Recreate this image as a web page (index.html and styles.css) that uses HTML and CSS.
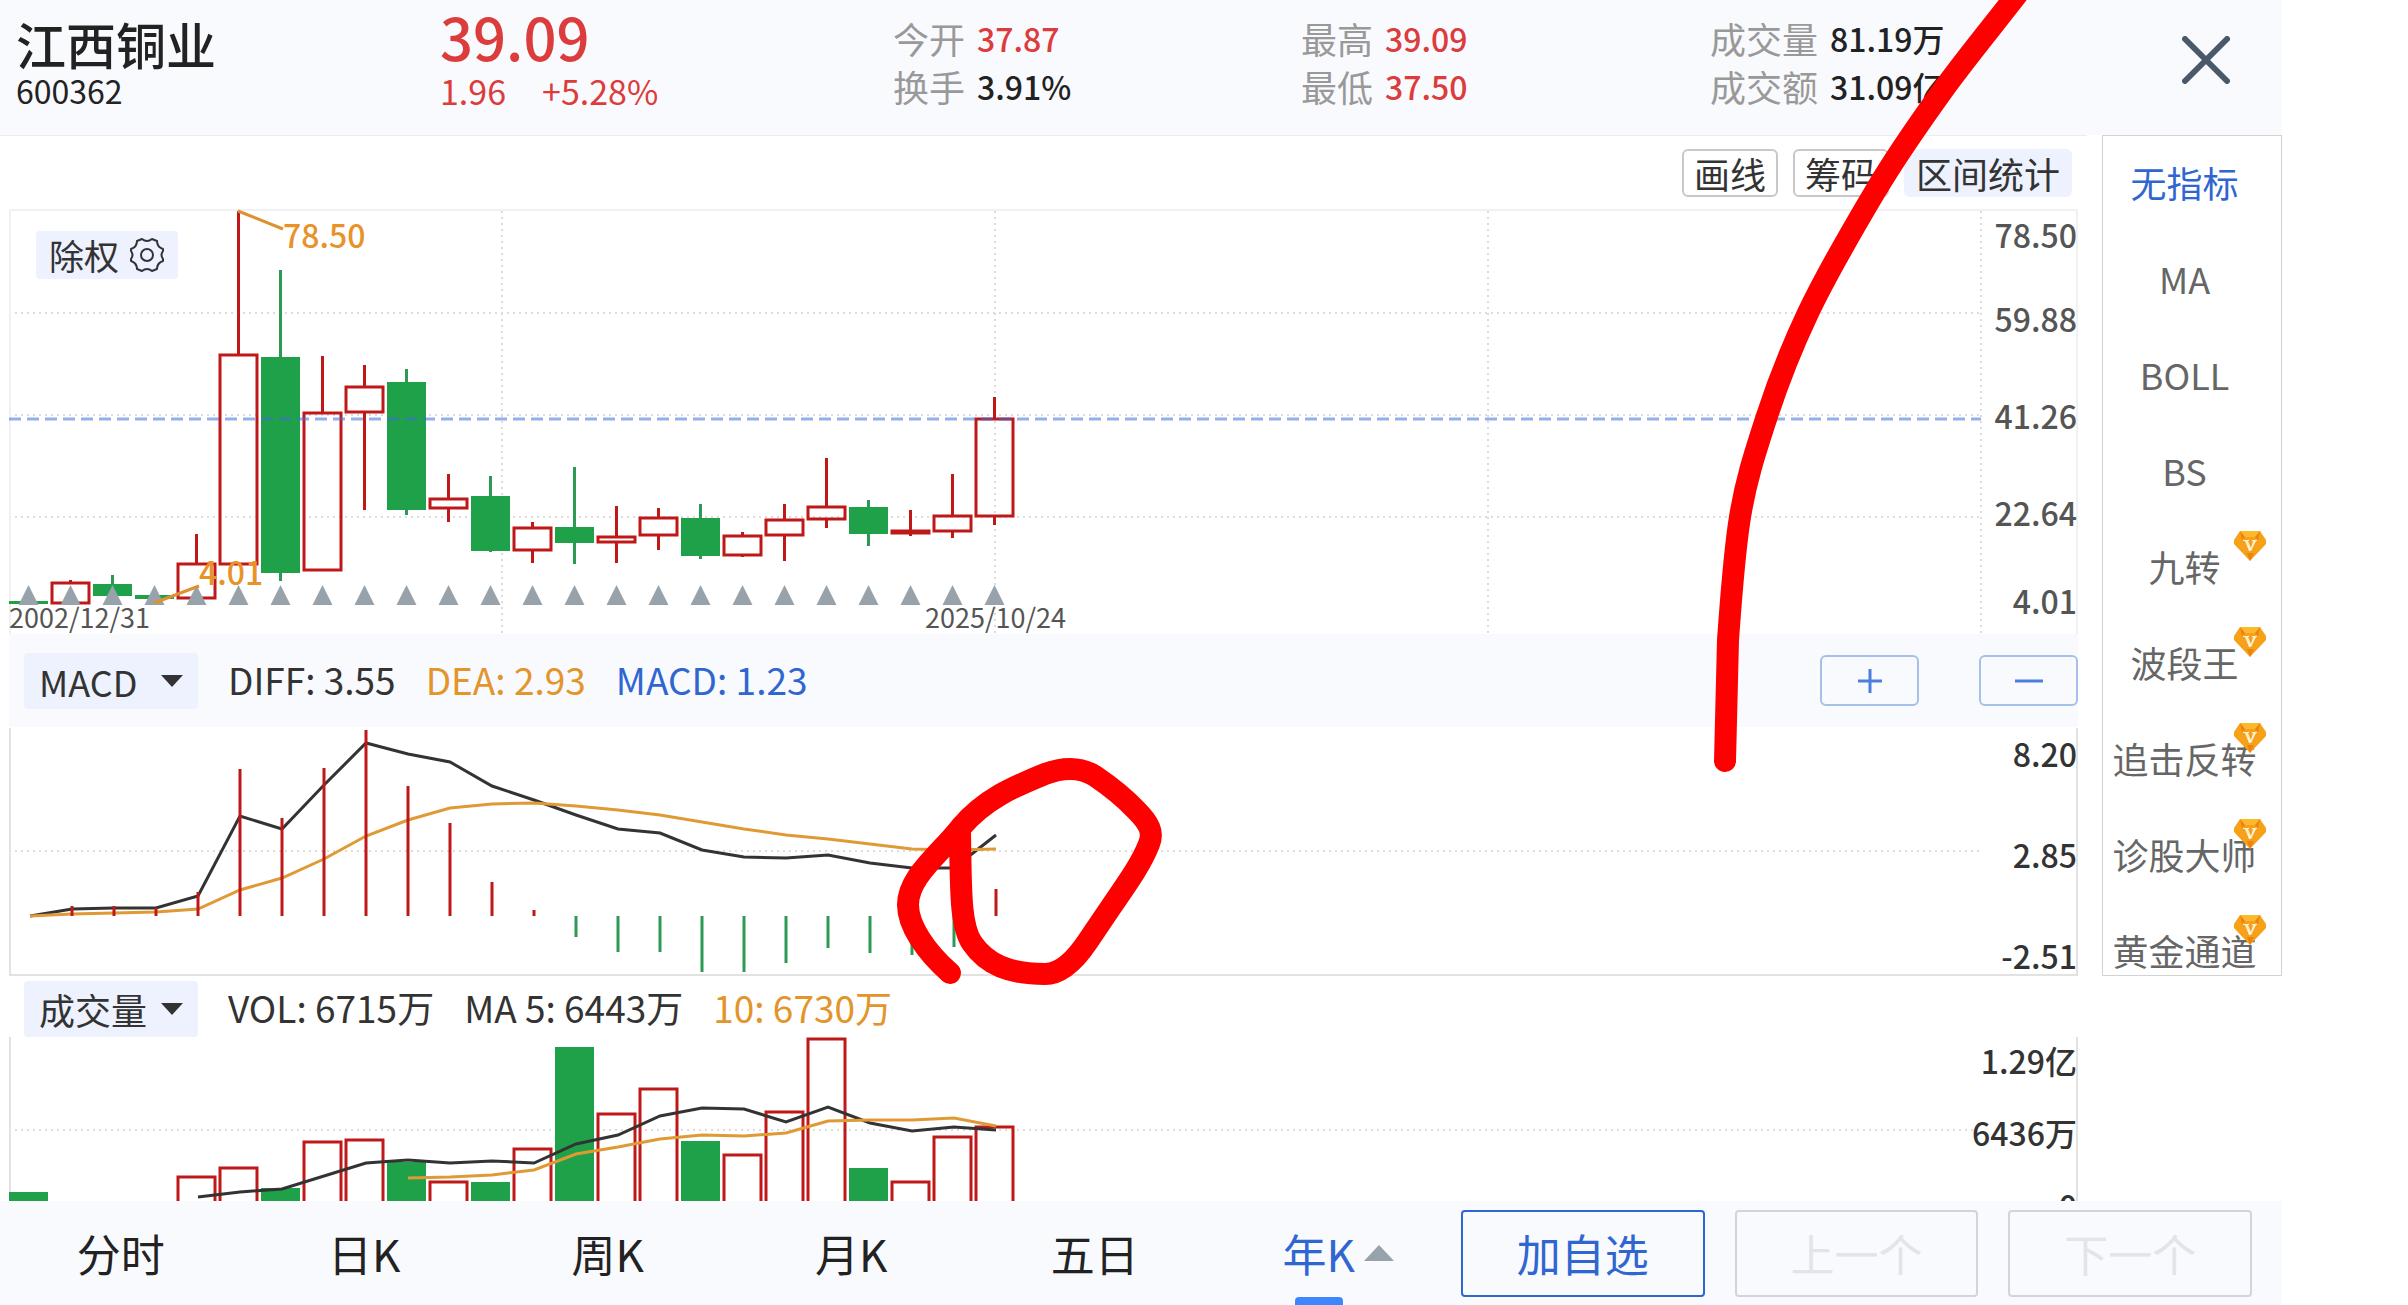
FILE: index.html
```html
<!DOCTYPE html>
<html lang="zh-CN">
<head>
<meta charset="utf-8">
<meta name="viewport" content="width=device-width, initial-scale=1">
<title>江西铜业 600362</title>
<link rel="stylesheet" href="styles.css">
</head>
<body>
<div class="app">
  <header class="quote">
    <div class="quote-id">
      <h1 class="stock-name">江西铜业</h1>
      <div class="stock-code">600362</div>
    </div>
    <div class="quote-price up">
      <div class="price">39.09</div>
      <div class="change"><span>1.96</span><span>+5.28%</span></div>
    </div>
    <dl class="stats">
      <div><dt>今开</dt><dd class="up">37.87</dd></div>
      <div><dt>换手</dt><dd>3.91%</dd></div>
    </dl>
    <dl class="stats">
      <div><dt>最高</dt><dd class="up">39.09</dd></div>
      <div><dt>最低</dt><dd class="up">37.50</dd></div>
    </dl>
    <dl class="stats">
      <div><dt>成交量</dt><dd>81.19万</dd></div>
      <div><dt>成交额</dt><dd>31.09亿</dd></div>
    </dl>
    <button class="close" type="button" aria-label="关闭">
      <svg width="48" height="48" viewBox="0 0 48 48"><path d="M3 3 45 45M45 3 3 45"/></svg>
    </button>
  </header>

  <main>
    <div class="upper">
      <section class="charts">
        <div class="toolbar">
          <button class="tool" type="button">画线</button>
          <button class="tool" type="button">筹码</button>
          <button class="tool tool-filled" type="button">区间统计</button>
        </div>

        <div class="plot">
          <svg class="chart" viewBox="9 209 2069 425" role="img" aria-label="年K线">
            <path class="frame-light" d="M10 634V210H2077V634"/>
            <path class="grid" d="M15 313H1981M15 415H1981M15 517H1981M502 211V634M995 211V634M1488 211V634M1981 211V634"/>
            <g id="candles"></g>
            <path class="last-price" d="M9 419H1981"/>
            <g id="events"></g>
            <path class="pointer" d="M238 211 283 229M154 603 199 586"/>
            <text class="extreme" x="283" y="248">78.50</text>
            <text class="extreme" x="199" y="585">4.01</text>
            <text class="date" x="9" y="628">2002/12/31</text>
            <text class="date" x="925" y="628">2025/10/24</text>
            <g class="axis axis-price">
              <text x="2077" y="248">78.50</text>
              <text x="2077" y="332">59.88</text>
              <text x="2077" y="429">41.26</text>
              <text x="2077" y="526">22.64</text>
              <text x="2077" y="614">4.01</text>
            </g>
          </svg>
          <button class="adjust" type="button">除权
            <svg width="38" height="36" viewBox="0 0 38 36"><path d="M14 2Q19 6 24 2L29 4Q29 10 35 12V14Q32 18 35 22V24Q29 26 29 32L24 34Q19 30 14 34L9 32Q9 26 3 24V22Q6 18 3 14V12Q9 10 9 4Z"/><circle cx="19" cy="18" r="6"/></svg>
          </button>
        </div>

        <div class="indicator-bar tinted">
          <div class="picker">
            <select aria-label="指标"><option>MACD</option></select>
            <svg width="22" height="12" viewBox="0 0 22 12"><path d="M0 0H22L11 12Z"/></svg>
          </div>
          <span class="reading">DIFF: 3.55</span><span class="reading orange">DEA: 2.93</span><span class="reading blue">MACD: 1.23</span>
          <div class="zoom">
            <button type="button" aria-label="放大"><svg width="28" height="28" viewBox="0 0 28 28"><path d="M2 14H26M14 2V26"/></svg></button>
            <button type="button" aria-label="缩小"><svg width="28" height="28" viewBox="0 0 28 28"><path d="M0 14H28"/></svg></button>
          </div>
        </div>

        <svg class="chart" viewBox="9 727 2069 249" role="img" aria-label="MACD">
          <path class="frame" d="M10 728V975H2077V728"/>
          <path class="grid" d="M15 851H1981"/>
          <polyline class="line-dark" points="30,916 72,909 114,908 156,908 198,896 240,816 282,829 324,785 366,743 408,754 450,762 492,786 534,800 576,815 618,829 660,833 702,850 744,857 786,858 828,855 870,863 912,868 954,868 996,835"/>
          <polyline class="line-orange" points="30,916 72,914 114,913 156,912 198,909 240,890 282,878 324,859 366,836 408,820 450,808 492,804 534,803 576,806 618,810 660,815 702,822 744,829 786,835 828,839 870,844 912,849 954,850 996,849"/>
          <g id="macd"></g>
          <g class="axis">
            <text x="2077" y="767">8.20</text>
            <text x="2077" y="868">2.85</text>
            <text x="2077" y="969">-2.51</text>
          </g>
        </svg>
      </section>

      <aside class="indicators">
        <ul>
          <li><button class="active" type="button">无指标</button></li>
          <li><button type="button">MA</button></li>
          <li><button type="button">BOLL</button></li>
          <li><button type="button">BS</button></li>
          <li><button class="vip" type="button">九转</button></li>
          <li><button class="vip" type="button">波段王</button></li>
          <li><button class="vip" type="button">追击反转</button></li>
          <li><button class="vip" type="button">诊股大师</button></li>
          <li><button class="vip" type="button">黄金通道</button></li>
        </ul>
      </aside>
    </div>

    <section class="volume">
      <div class="indicator-bar">
        <div class="picker">
          <select aria-label="副图指标"><option>成交量</option></select>
          <svg width="22" height="12" viewBox="0 0 22 12"><path d="M0 0H22L11 12Z"/></svg>
        </div>
        <span class="reading">VOL: 6715万</span><span class="reading">MA 5: 6443万</span><span class="reading orange">10: 6730万</span>
      </div>
      <svg class="chart" viewBox="9 1037 2069 164" role="img" aria-label="成交量">
        <path class="frame" d="M10 1037V1201M2077 1037V1201"/>
        <path class="grid" d="M15 1130H1974"/>
        <g id="volumes"></g>
        <polyline class="line-dark" points="198,1197 240,1192 282,1189 324,1176 366,1163 408,1160 450,1163 492,1161 534,1163 576,1144 618,1135 660,1116 702,1108 744,1109 786,1122 828,1107 870,1123 912,1131 954,1127 996,1130"/>
        <polyline class="line-orange" points="408,1178 450,1177 492,1175 534,1170 576,1154 618,1147 660,1139 702,1135 744,1136 786,1133 828,1121 870,1120 912,1120 954,1118 996,1126"/>
        <g class="axis">
          <text x="2077" y="1074">1.29亿</text>
          <text x="2077" y="1146">6436万</text>
          <text x="2077" y="1219">0</text>
        </g>
      </svg>
    </section>
  </main>

  <footer class="bottom">
    <nav class="tabs">
      <button type="button">分时</button>
      <button type="button">日K</button>
      <button type="button">周K</button>
      <button type="button">月K</button>
      <button type="button">五日</button>
      <button class="active" type="button"><span>年K</span><svg width="30" height="16" viewBox="0 0 30 16"><path d="M0 16H30L15 0Z"/></svg></button>
    </nav>
    <div class="actions">
      <button class="primary" type="button">加自选</button>
      <button type="button" disabled>上一个</button>
      <button type="button" disabled>下一个</button>
    </div>
  </footer>

  <svg class="markup" viewBox="0 0 2282 1305" aria-hidden="true">
    <path d="M2022 -12C2000 17 1966 58 1943 90S1898 153 1876 190S1826 275 1808 313S1777 385 1766 419S1746 480 1740 517S1731 599 1728 640L1725 761"/>
    <path d="M950 973C925 951 908 925 908 905C908 877 938 856 961 827C985 799 1013 787 1045 774Q1074 763 1095 776Q1120 793 1136 810C1149 823 1154 832 1149 844C1142 862 1131 878 1111 907L1088 941Q1066 974 1045 974C1010 974 987 965 972 943C960 925 961 890 960 833"/>
  </svg>
</div>

<svg class="defs" width="0" height="0" aria-hidden="true">
  <symbol id="vip" viewBox="0 0 32 30">
    <path fill="#f7a11b" d="M6 0H26L32 9V13L16 30 0 13V9Z"/>
    <path fill="#fdb92c" d="M6 0H26L21 6H11Z"/>
    <path fill="#e8850c" d="M11 6 6 0 8 9ZM21 6 26 0 24 9ZM13 22 16 30 20 22Z"/>
    <path fill="#fff1cf" d="M9 9H15V10H14L17 17 19 10H18V9H23V10H22L17 20H15L11 10H9Z"/>
  </symbol>
</svg>
<script src="script.js"></script>
</body>
</html>
```
FILE: styles.css
```css
* { box-sizing: border-box; }

body {
  margin: 0;
  padding-right: 126px;
  background: #fff;
  color: #222;
  font-family: "Noto Sans CJK SC", "Noto Sans", sans-serif;
  font-size: 36px;
  overflow-x: hidden;
}

button, select {
  margin: 0;
  padding: 0;
  border: 0;
  background: none;
  color: inherit;
  font: inherit;
}

.app {
  position: relative;
  overflow: hidden;
}

.up { color: #dc3c3c; }
.orange { color: #e3942a; }
.blue { color: #2f66cf; }
.defs { position: absolute; }

/* quote header */
.quote {
  display: grid;
  grid-template-columns: 425fr 452fr 408fr 409fr 472fr 100fr;
  height: 135px;
  padding-left: 16px;
  background: #f9fafe;
}

.stock-name {
  margin: 0;
  padding-top: 12px;
  font-size: 50px;
  font-weight: 500;
  line-height: 62px;
}

.stock-code {
  font-size: 32px;
  line-height: 32px;
}

.quote-price { margin-left: -1px; }

.price {
  padding-top: 4px;
  font-size: 58px;
  font-weight: 500;
  line-height: 64px;
}

.change {
  display: flex;
  gap: 36px;
  padding-top: 2px;
  font-size: 34px;
  line-height: 42px;
}

.stats {
  margin: 0;
  padding-top: 14px;
}

.stats div {
  display: flex;
  gap: 12px;
  line-height: 48px;
}

.stats dt { color: #999; }

.stats dd {
  margin: 0;
  font-size: 32px;
  font-weight: 500;
}

.close {
  align-self: start;
  justify-self: start;
  margin-top: 36px;
  height: 48px;
}

.close svg {
  display: block;
  fill: none;
  stroke: #4a5969;
  stroke-width: 6;
  stroke-linecap: round;
}

/* charts and indicator column */
.upper {
  display: grid;
  grid-template-columns: minmax(0, 1fr) 180px;
  column-gap: 15px;
}

.charts {
  padding: 0 9px;
  border-top: 1px solid #ececf0;
}

.toolbar {
  display: flex;
  justify-content: flex-end;
  gap: 15px;
  padding: 13px 6px 12px 0;
}

.tool {
  height: 48px;
  padding: 0 10px;
  border: 2px solid #c8c8c8;
  border-radius: 6px;
  color: #333;
  line-height: 44px;
}

.tool-filled {
  border-color: #edf2fe;
  background: #edf2fe;
}

.plot { position: relative; }

.chart {
  display: block;
  width: 100%;
  height: auto;
  fill: none;
}

.frame { stroke: #e2e2e2; stroke-width: 2; }
.frame-light { stroke: #f1f1f3; stroke-width: 2; }
.grid { stroke: #dcdcde; stroke-width: 2; stroke-dasharray: 2 4; }
.last-price { stroke: #3a6fd8; stroke-width: 3; stroke-dasharray: 12 6; opacity: .55; }
.pointer { stroke: #de9130; stroke-width: 3; }
.line-dark { stroke: #333; stroke-width: 3; }
.line-orange { stroke: #e09a35; stroke-width: 3; }
.rise { stroke: #bf1818; stroke-width: 3; }
.fall { stroke: #2c9a54; stroke-width: 3; }
.fall-body { fill: #1fa14a; }
.event { fill: #98a2ab; }

.extreme { fill: #e8922a; font-size: 32px; font-weight: 500; }
.date { fill: #555; font-size: 27px; }

.axis {
  fill: #333;
  font-size: 32px;
  font-weight: 500;
  text-anchor: end;
}

.axis-price { fill: #555; }

.adjust {
  position: absolute;
  top: 22px;
  left: 27px;
  display: flex;
  align-items: center;
  gap: 9px;
  height: 48px;
  padding: 0 12px 0 13px;
  border-radius: 4px;
  background: #edf2fe;
  color: #333;
  font-size: 35px;
  line-height: 48px;
}

.adjust svg { fill: none; stroke: #333; stroke-width: 2; stroke-linejoin: round; }

.indicator-bar {
  display: flex;
  align-items: center;
  gap: 30px;
  padding: 5px 0 0 15px;
  color: #333;
  line-height: 56px;
}

.tinted {
  height: 93px;
  padding-top: 0;
  background: #f9fafe;
}

.reading {
  padding-bottom: 3px;
  font-size: 37px;
  line-height: 53px;
}

.picker { position: relative; }

.picker select {
  appearance: none;
  display: block;
  width: 174px;
  height: 56px;
  padding: 0 0 3px 15px;
  border-radius: 4px;
  background: #edf2fe;
}

.picker svg {
  position: absolute;
  top: 22px;
  right: 15px;
  fill: #333;
  pointer-events: none;
}

.zoom {
  display: flex;
  gap: 60px;
  margin-left: auto;
}

.zoom button {
  display: flex;
  align-items: center;
  justify-content: center;
  width: 99px;
  height: 51px;
  border: 2px solid #a6c0e9;
  border-radius: 6px;
}

.zoom svg { stroke: #4a80dc; stroke-width: 3; }

.indicators {
  height: 0;
  min-height: 100%;
  overflow: hidden;
  border: 1px solid #d2d2d2;
}

.indicators ul {
  margin: 0;
  padding: 0;
  list-style: none;
}

.indicators button {
  display: block;
  position: relative;
  width: 100%;
  height: 96px;
  padding: 0 15px 3px 0;
  color: #666;
  line-height: 93px;
  text-align: center;
  white-space: nowrap;
}

.indicators .active { color: #2f66cf; }

.indicators svg {
  position: absolute;
  top: 11px;
  right: 15px;
  width: 32px;
  height: 30px;
}

.volume { padding: 0 204px 0 9px; }

/* period tabs and actions */
.bottom {
  display: flex;
  height: 104px;
  padding-right: 30px;
  background: #f9fafe;
  font-size: 44px;
}

.tabs {
  display: grid;
  grid-template-columns: repeat(6, 1fr);
  flex: 1461 1 0;
}

.tabs button {
  display: flex;
  align-items: center;
  justify-content: center;
  gap: 9px;
  padding: 2px 2px 2px 0;
  line-height: 100px;
}

.tabs .active { color: #2f66cf; }
.tabs svg { fill: #98a2ab; }
.tabs span { position: relative; }

.tabs span::after {
  content: "";
  position: absolute;
  bottom: -2px;
  left: 50%;
  width: 48px;
  height: 8px;
  margin-left: -24px;
  border-radius: 4px 4px 0 0;
  background: #3d86fd;
}

.actions {
  display: grid;
  grid-template-columns: repeat(3, 1fr);
  gap: 30px;
  flex: 791 1 0;
  padding: 9px 0 8px;
}

.actions button {
  padding-bottom: 2px;
  border: 2px solid #d3d4d9;
  border-radius: 4px;
  color: #e3e4e7;
}

.actions .primary {
  border-color: #2f66cf;
  color: #2f66cf;
}

/* freehand strokes over the page */
.markup {
  position: absolute;
  top: 0;
  left: 0;
  width: 100%;
  height: auto;
  fill: none;
  stroke: #fe0000;
  stroke-width: 22;
  stroke-linecap: round;
  stroke-linejoin: round;
  pointer-events: none;
}
```
FILE: script.js
```js
const PITCH = 42;
const BODY = 39;
const FLOOR = 1210;

// [direction, body top, body bottom, high, low] per year from 2002
const candles = [
  ['d', 601, 604, 601, 604], ['u', 582, 604, 580, 604], ['d', 584, 596, 575, 596], ['d', 595, 599, 595, 603],
  ['u', 563, 599, 534, 599], ['u', 354, 565, 211, 565], ['d', 357, 573, 270, 581], ['u', 412, 571, 356, 571],
  ['u', 386, 413, 365, 510], ['d', 382, 510, 369, 515], ['u', 498, 509, 474, 522], ['d', 496, 551, 476, 552],
  ['u', 527, 551, 522, 563], ['d', 527, 543, 467, 564], ['u', 536, 543, 506, 563], ['u', 517, 536, 508, 550],
  ['d', 518, 556, 504, 559], ['u', 535, 556, 532, 557], ['u', 519, 536, 504, 561], ['u', 506, 520, 458, 528],
  ['d', 507, 534, 500, 546], ['u', 530, 534, 510, 536], ['u', 515, 532, 474, 538], ['u', 418, 517, 397, 525]
];

const volumes = [1192, 0, 0, 0, 1176, 1167, 1188, 1141, 1139, 1162, 1181, 1182,
  1148, 1047, 1113, 1088, 1141, 1154, 1111, 1038, 1168, 1181, 1136, 1126];

const macd = [916, 906, 906, 908, 892, 769, 818, 768, 730, 786, 823, 882,
  910, 937, 952, 952, 972, 972, 963, 948, 953, 955, 947, 889];

function body(dir, left, top, bottom) {
  if (dir === 'd') {
    return `<rect class="fall-body" x="${left}" y="${top}" width="${BODY}" height="${bottom - top}"/>`;
  }
  const h = Math.max(bottom - top - 2, 1);
  return `<rect class="rise" x="${left + 1}" y="${top + 1}" width="${BODY - 2}" height="${h}"/>`;
}

function bar(dir, x, from, to) {
  return `<path class="${dir === 'd' ? 'fall' : 'rise'}" d="M${x} ${from}V${to}"/>`;
}

let price = '', events = '', vol = '', hist = '';
candles.forEach(([dir, top, bottom, high, low], i) => {
  const left = 9 + PITCH * i;
  const mid = left + BODY / 2;
  if (high < top) price += bar(dir, mid, high, top);
  if (low > bottom) price += bar(dir, mid, bottom, low);
  price += body(dir, left, top, bottom);
  events += `<path class="event" d="M${mid - 10} 605h20l-10-20z"/>`;
  if (volumes[i]) vol += body(dir, left, volumes[i], FLOOR);
  hist += bar(macd[i] > 916 ? 'd' : 'u', 30 + PITCH * i, macd[i], 916);
});

document.getElementById('candles').innerHTML = price;
document.getElementById('events').innerHTML = events;
document.getElementById('volumes').innerHTML = vol;
document.getElementById('macd').innerHTML = hist;

document.querySelectorAll('.vip').forEach((item) => {
  item.insertAdjacentHTML('beforeend', '<svg><use href="#vip"/></svg>');
});
```
